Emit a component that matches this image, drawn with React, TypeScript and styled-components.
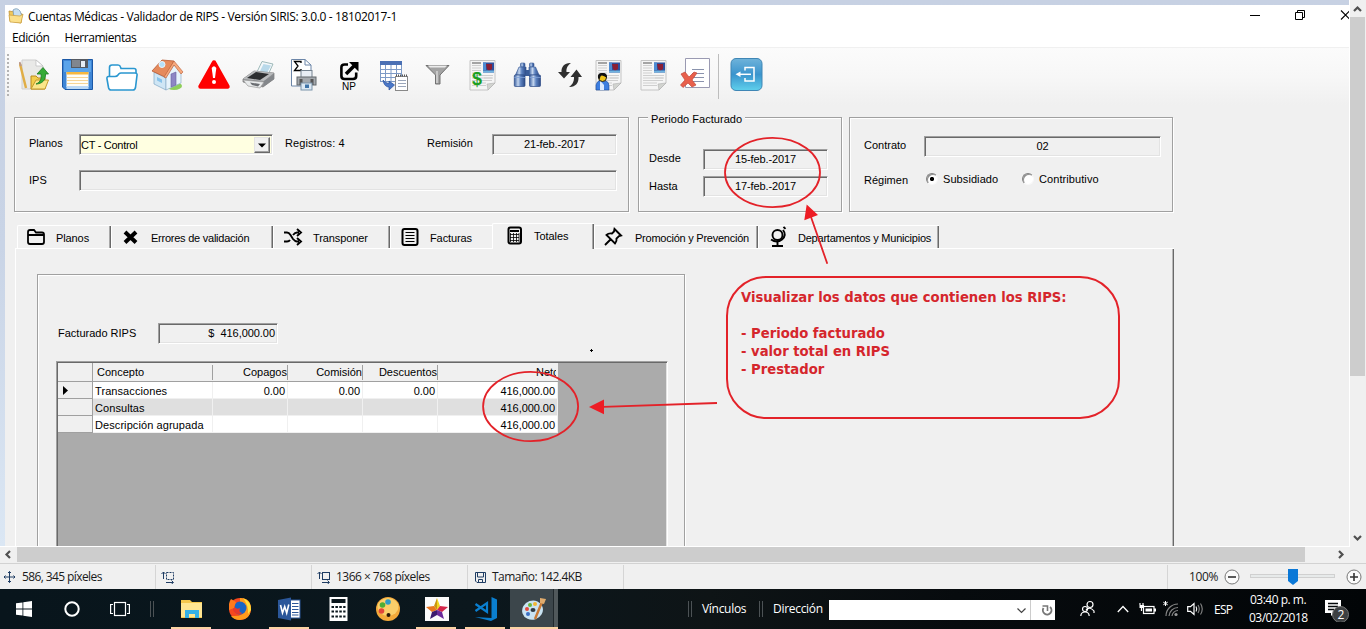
import React from 'react';
import styled, { createGlobalStyle, css } from 'styled-components';

const Global = createGlobalStyle`
  *, *::before, *::after { box-sizing: border-box; }
  body { margin: 0; overflow: hidden; }
  svg { display: block; flex: none; }
`;

const ui = `'Open Sans', 'Noto Sans', sans-serif`;
const form = `'Liberation Sans', Arial, sans-serif`;
const red = '#e32229';

const Screen = styled.div`
  width: 1366px; height: 629px; display: flex; flex-direction: column;
  overflow: hidden; background: #f0f0f0; color: #000;
`;
const Workspace = styled.div`display: flex; height: 547px; flex: none;`;
const Canvas = styled.div`
  position: relative; width: 1350px; height: 547px; overflow: hidden;
  padding: 5px 0 0 5px; border-right: 1px solid #fff; border-bottom: 1px solid #fff;
  background: linear-gradient(#c7d1e3 0, #c9d4e6 45%, #dbe7f4 100%);
`;
const AppWindow = styled.div`
  height: 100%; background: #f0f0f0; display: flex; flex-direction: column;
  font: 11px/13px ${form};
`;

const TitleBar = styled.div`
  height: 22px; flex: none; background: #fff; display: flex; align-items: center; padding-left: 3px;
`;
const TitleText = styled.div`
  font: 12px/20px ${ui}; letter-spacing: -0.36px; margin: 2px 0 0 4px; white-space: nowrap;
`;
const WindowButtons = styled.div`margin-left: auto; height: 22px;`;
const MenuBar = styled.div`
  height: 20px; flex: none; background: #fff; display: flex; gap: 15px; padding: 0 7px;
  font: 12px/22px ${ui}; letter-spacing: -0.42px;
`;
const ToolBar = styled.div`
  height: 58px; flex: none; display: flex; align-items: flex-start; padding: 6px 0 0 2px;
  border-top: 1px solid #f0f0f0;
  background: linear-gradient(#fbfbfb, #f7f7f7 50%, #f0f0f0);
`;
const Grip = styled.div`
  width: 2px; height: 42px; flex: none;
  background: repeating-linear-gradient(#b4b4b4 0 2px, transparent 2px 4px);
`;
const Tool = styled.div<{ $gap: number }>`margin: 3px 0 0 ${p => p.$gap}px; height: 36px; flex: none;`;
const ToolSeparator = styled.div`width: 1px; height: 45px; margin-left: 7px; background: #bdbdbd;`;

const Groups = styled.div`display: flex; padding: 12px 0 0 9px; height: 107px; flex: none;`;
const GroupBox = styled.div<{ $w: number; $ml?: number; $top: number; $pl: number }>`
  position: relative; width: ${p => p.$w}px; height: 95px; margin-left: ${p => p.$ml ?? 0}px;
  padding: ${p => p.$top}px 0 0 ${p => p.$pl}px;
  border: 1px solid #a0a0a0; box-shadow: 1px 1px #fff, inset 1px 1px #fff;
`;
const Legend = styled.div`
  position: absolute; top: -5px; left: 9px; padding: 0 3px; background: #f0f0f0; letter-spacing: 0.04px;
`;
const FieldRow = styled.div<{ $mt?: number }>`
  display: flex; align-items: center; height: 21px; margin-top: ${p => p.$mt ?? 0}px; white-space: nowrap;
`;
const Label = styled.div<{ $w: number; $dy?: number; $ls?: number }>`
  width: ${p => p.$w}px; flex: none; margin-top: ${p => p.$dy ?? -2}px; letter-spacing: ${p => p.$ls ?? 0}px;
`;
const sunken = css`
  border: 1px solid; border-color: #a0a0a0 #fff #fff #a0a0a0;
  box-shadow: inset 1px 1px #696969, inset -1px -1px #e3e3e3;
`;
const Field = styled.div<{ $w: number; $align?: string; $ls?: number }>`
  ${sunken}
  width: ${p => p.$w}px; height: 21px; flex: none; line-height: 18px;
  text-align: ${p => p.$align ?? 'center'}; padding: 0 2px; white-space: pre; letter-spacing: ${p => p.$ls ?? 0}px;
`;
const Combo = styled.div`
  ${sunken}
  width: 194px; height: 21px; flex: none; background: #ffffe1; display: flex; padding: 2px 2px 2px 1px;
  line-height: 16px; letter-spacing: -0.28px; justify-content: space-between;
`;
const ComboButton = styled.div`
  width: 16px; height: 16px; background: #f0f0f0; border: 1px solid;
  border-color: #e3e3e3 #696969 #696969 #e3e3e3; box-shadow: inset -1px -1px #a0a0a0;
  display: flex; align-items: center; justify-content: center;
`;
const Radio = styled.div<{ $on?: boolean; $ml?: number }>`
  width: 12px; height: 12px; border-radius: 50%; margin: -3px 5px 0 ${p => p.$ml ?? 0}px; flex: none;
  border: 1px solid; border-color: #808080 #f8f8f8 #f8f8f8 #808080; box-shadow: inset 1px 1px #909090;
  background: ${p => (p.$on ? 'radial-gradient(circle at 5px 5px, #000 1.8px, #fff 2.4px)' : '#fff')};
`;

const TabStrip = styled.div`
  display: flex; align-items: flex-end; height: 36px; padding-left: 12px; flex: none;
`;
const Tab = styled.div<{ $w: number; $active?: boolean; $noEdge?: boolean }>`
  width: ${p => p.$w}px; height: ${p => (p.$active ? 26 : 23)}px; flex: none; display: flex;
  align-items: center; white-space: nowrap; padding-bottom: ${p => (p.$active ? 2 : 0)}px;
  border-top: 1px solid #fff; border-left: 1px solid #fff; border-top-left-radius: 2px;
  box-shadow: ${p => (p.$noEdge ? 'none' : 'inset -1px 0 #696969, inset -2px 0 #a8a8a8')};
  margin-bottom: ${p => (p.$active ? -1 : 0)}px; background: #f0f0f0; position: relative;
`;
const TabIcon = styled.div<{ $l: number; $r: number }>`margin: 0 ${p => p.$r}px 0 ${p => p.$l}px;`;
const TabText = styled.span<{ $ls?: number }>`letter-spacing: ${p => p.$ls ?? 0}px; padding-top: 2px;`;
const TabPage = styled.div`
  width: 1159px; height: 300px; margin-left: 10px; flex: none; padding: 25px 0 0 21px;
  border-top: 1px solid #fff; border-left: 1px solid #fff;
  box-shadow: inset -1px 0 #696969, inset -2px 0 #b8b8b8;
`;
const TotalsBox = styled.div`
  width: 648px; height: 290px; border: 1px solid #a0a0a0; padding: 48px 0 0 18px;
  box-shadow: 1px 1px #fff, inset 1px 1px #fff;
`;
const DataGrid = styled.div`
  width: 612px; height: 210px; margin-top: 17px; background: #ababab;
  border: 1px solid; border-color: #a0a0a0 #fff #fff #a0a0a0;
  box-shadow: inset 1px 1px #696969, inset -1px 0 #e3e3e3; padding: 1px;
`;
const GridLine = styled.div<{ $shade?: string; $head?: boolean }>`
  display: grid; grid-template-columns: 35px 120px 75px 75px 75px 120px; width: 500px;
  grid-template-rows: 100%;
  height: ${p => (p.$head ? 19 : 17)}px; background: ${p => p.$shade ?? '#fff'};
`;
const RowHead = styled.div`
  background: #f0f0f0; border-right: 1px solid #a0a0a0; border-bottom: 1px solid #a0a0a0; padding: 4px 0 0 5px;
`;
const HeadCell = styled.div<{ $first?: boolean; $last?: boolean }>`
  border-bottom: 1px solid #a0a0a0; line-height: 18px; padding: 0 1px 0 ${p => (p.$first ? 4 : 0)}px;
  text-align: ${p => (p.$first ? 'left' : 'right')}; white-space: nowrap; overflow: hidden;
  background: ${p => (p.$last ? 'none' : 'linear-gradient(#a0a0a0, #a0a0a0) right 2px / 1px 15px no-repeat')};
`;
const Clip = styled.span`
  display: inline-block; width: 20px; margin-right: 1px; overflow: hidden; text-align: left; vertical-align: top;
`;
const Cell = styled.div<{ $first?: boolean }>`
  border-right: 1px solid #f0f0f0; border-bottom: 1px solid #f0f0f0; height: 17px; line-height: 16px;
  padding: 1px 2px 0; text-align: ${p => (p.$first ? 'left' : 'right')}; white-space: nowrap;
  letter-spacing: ${p => (p.$first ? 0.08 : -0.05)}px;
`;

const Marks = styled.svg`position: absolute; left: 0; top: 0;`;
const Note = styled.div`
  position: absolute; left: 726px; top: 276px; width: 394px; height: 143px;
  border: 2px solid ${red}; border-radius: 40px; padding: 10px 0 0 13px;
  font: bold 14.67px/18px 'DejaVu Sans Condensed', 'DejaVu Sans', sans-serif; font-stretch: condensed;
  color: #d5262c; white-space: pre;
`;

const VScroll = styled.div`
  width: 16px; height: 547px; background: #f0f0f0; display: flex; flex-direction: column; align-items: center;
  justify-content: space-between; padding-right: 1px;
`;
const VThumb = styled.div`width: 15px; height: 359px; background: #cdcdcd;`;
const VTop = styled.div`display: flex; flex-direction: column; align-items: center;`;
const HScroll = styled.div`
  height: 16px; flex: none; display: flex; background: #f0f0f0; align-items: flex-start;
`;
const HThumb = styled.div`width: 1288px; height: 15px; background: #cdcdcd; margin-right: 31px;`;

const StatusBar = styled.div`
  height: 26px; flex: none; display: flex; border-top: 1px solid #d2d2d2; background: #f0f0f0;
  font: 12px/26px ${ui}; letter-spacing: -0.6px; color: #1a1a1a; white-space: nowrap;
`;
const StatusCell = styled.div<{ $w: number; $pl: number; $gap?: number }>`
  width: ${p => p.$w}px; padding-left: ${p => p.$pl}px; display: flex; align-items: center; gap: ${p => p.$gap ?? 7}px;
  border-right: 1px solid #d5d5d5; height: 24px; margin-top: 1px; flex: none;
`;
const StatusText = styled.span<{ $ls?: number }>`letter-spacing: ${p => p.$ls ?? -0.6}px;`;
const ZoomTools = styled.div`display: flex; align-items: center; padding-left: 21px;`;
const ZoomValue = styled.div`width: 35px; letter-spacing: -0.4px;`;

const TaskBar = styled.div`
  height: 40px; flex: none; display: flex; color: #fff;
  background: linear-gradient(90deg, #08151c 0, #0b171d 35%, #0e1416 52%, #070b0e 70%, #020507 100%);
  font: 12px/40px ${ui}; letter-spacing: -0.2px; white-space: nowrap;
`;
const Slot = styled.div<{ $w: number }>`
  width: ${p => p.$w}px; height: 40px; display: flex; align-items: center; justify-content: center; flex: none;
`;
const TaskButton = styled.div<{ $open?: boolean; $current?: boolean }>`
  width: ${p => (p.$current ? 48 : 49)}px; height: 40px; flex: none; display: flex; flex-direction: column;
  align-items: center; justify-content: space-between; padding-top: 7px;
  background: ${p => (p.$current ? 'linear-gradient(90deg, #3c464b 0 43px, #20282c 43px 44px, #50585b 44px)' : 'none')};
  &::after {
    content: ''; width: ${p => (p.$current ? 48 : 40)}px; height: 2px;
    background: ${p => (p.$open || p.$current ? '#fbd3a3' : 'none')};
    margin-right: ${p => (p.$current ? 0 : 1)}px;
  }
`;
const BarGrip = styled.div<{ $ml: number }>`
  width: 4px; height: 16px; margin: 12px 0 0 ${p => p.$ml}px; flex: none;
  border-left: 1px solid #4c5255; border-right: 1px solid #4c5255;
`;
const BarText = styled.div<{ $w: number; $ls?: number }>`
  width: ${p => p.$w}px; letter-spacing: ${p => p.$ls ?? -0.2}px; flex: none; line-height: 39px; padding-left: 10px;
`;
const Address = styled.div`
  width: 226px; height: 20px; margin-top: 11px; background: #fff; flex: none; display: flex;
  justify-content: flex-end; align-items: center;
`;
const Tray = styled.div`display: flex; flex: none; height: 40px; align-items: center;`;
const Gap = styled.div<{ $w: number }>`width: ${p => p.$w}px; flex: none;`;
const Clock = styled.div`width: 58px; text-align: center; line-height: 18px; letter-spacing: -0.5px; flex: none;`;

const Svg = ({ w, h = 36, children }: { w: number; h?: number; children: React.ReactNode }) => (
  <svg width={w} height={h} viewBox={`0 0 ${w} ${h}`} fill="none">{children}</svg>
);

const NewsDoc = () => (
  <>
    <path d="M1 3.500H26V26L19 33H1Z" fill="#f5f5f5" stroke="#c4c4c4" />
    <path d="M26 26L19 33L18 27Z" fill="#d2d4d0" stroke="#b0b0b0" strokeWidth=".6" />
    <path d="M3 6H12" stroke="#777" strokeWidth="1.300" />
    <path d="M3 8.500H12M3 11H12M3 13.500H12M3 16H12M3 18.500H23M3 21H23M3 23.500H23M3 26H17M3 28.500H17M15 18.500H24M15 21H24" stroke="#cfcfcf" />
    <rect x="14" y="5.500" width="11" height="10" fill="#2d4f9d" />
    <path d="M14 5.500H17V13H14Z" fill="#4e8bd2" />
    <path d="M17 7H23V12L20 14L18 12Z" fill="#8b1f35" />
    <path d="M14 13.500H25V15.500H14Z" fill="#6fb4e0" />
  </>
);

const tools: { gap: number; w: number; art: React.ReactNode }[] = [
  { gap: 10, w: 30, art: (<>
    <path d="M3 3H17L24 9V32H3Z" fill="#e9e9e7" stroke="#cfcfcf" /><path d="M17 3V9H24Z" fill="#fff" stroke="#bbb" strokeWidth=".7" />
    <path d="M1 7L7 31" stroke="#e0ad45" strokeWidth="2.400" /><path d="M.5 5L2 9" stroke="#b98" strokeWidth="2" />
    <path d="M12 19H17L19 21H26V32H12Z" fill="#f3cd4c" stroke="#b98a1c" /><path d="M12 32L17 23H29.500L26 32Z" fill="#fbe68a" stroke="#c59a2c" />
    <path d="M17 27C22 25 22.500 21 22 17H18L24 10.500L29.500 17H26.500C27 23 23 27 17 27Z" fill="#35ab35" stroke="#1b7a22" strokeWidth=".8" />
  </>) },
  { gap: 13, w: 32, art: (<>
    <path d="M.5 2.500H30.500V32.500H3L.5 30Z" fill="#3f86d6" stroke="#1b58a6" /><path d="M2 4H29V15H2Z" fill="#5ba4ea" />
    <rect x="9" y="2" width="17" height="9" fill="#555a62" /><rect x="10" y="3" width="8" height="7" fill="#80868f" /><rect x="19" y="4" width="4" height="6" fill="#e6edf4" />
    <rect x="4.500" y="15" width="22" height="15" fill="#fffdf6" /><rect x="4.500" y="15" width="22" height="2.500" fill="#f7b73f" /><path d="M5 20.500H26M5 23.500H26M5 26.500H26" stroke="#f7d596" />
    <rect x="4.500" y="29" width="22" height="3" fill="#bcd9f6" />
  </>) },
  { gap: 12, w: 32, art: (<>
    <path d="M3.500 20V10.500Q3.500 8 6 8H12Q14 8 14.500 10L15 11.500H28Q30 11.500 30 13.500V20" fill="#fff" stroke="#2a97d0" strokeWidth="1.600" />
    <path d="M9 19.500Q11 19.500 12 18L13 16.800Q13.800 16 15 16H29Q31.500 16 31 18.500L29.500 30.500Q29 33 27 33H5Q3 33 2.500 30.500L1 22Q.6 19.500 2.500 19.500Z" fill="#fff" stroke="#2a97d0" strokeWidth="1.600" />
  </>) },
  { gap: 13, w: 33, art: (<>
    <ellipse cx="23" cy="29" rx="8" ry="4" fill="#8fcf5a" />
    <path d="M3 15L15 21V33L3 27Z" fill="#cfe6f5" stroke="#7fa6c4" strokeWidth=".7" /><path d="M15 20L23 8L30 15V26L15 33Z" fill="#e6f3fb" stroke="#8fb0ca" strokeWidth=".7" />
    <path d="M11 3L23 4L14 20L1 14Z" fill="#e58a5c" stroke="#b75a34" strokeWidth=".8" /><path d="M23 4L32 15L30 17L23 8L15 21L13 20Z" fill="#f7a97d" stroke="#b75a34" strokeWidth=".6" />
    <path d="M20 17L25 15V28L20 30Z" fill="#8d86c4" stroke="#655fa0" strokeWidth=".6" /><circle cx="11" cy="7.500" r="3" fill="#b5e0fa" stroke="#e8f6ff" />
    <path d="M6 20L11 22.500V26L6 23.500Z" fill="#89c3ea" />
  </>) },
  { gap: 13, w: 34, art: (<>
    <path d="M17 5.500L30.500 29.500H3.500Z" fill="#f00" stroke="#f00" strokeWidth="4.500" strokeLinejoin="round" />
    <path d="M14.700 11Q17 7.500 19.300 11L18 21H16Z" fill="#fff" /><circle cx="17" cy="25" r="2" fill="#fff" />
  </>) },
  { gap: 11, w: 34, art: (<>
    <path d="M14 17L20 4.500L31 7L26 18Z" fill="#f4f8fa" stroke="#8aa" strokeWidth=".8" /><path d="M18 14L21.500 7L29 8.500L25 16Z" fill="#b9d9ea" />
    <path d="M1 22L12 14L32 16V22L21 30L1 25Z" fill="#8b8d90" stroke="#777" strokeWidth=".7" /><path d="M1 22L12 14L32 16L22 24Z" fill="#b9bbbd" />
    <path d="M5 21L14 15L27 17L18 23Z" fill="#2c2e30" /><path d="M1 23L22 25L18 31L6 29Z" fill="#e9ebec" stroke="#999" strokeWidth=".7" /><path d="M8 25.500L18 27L16 29.500L10 28Z" fill="#6b6e72" />
    <path d="M22 24L32 18V22L22 29Z" fill="#84878b" />
  </>) },
  { gap: 14, w: 28, art: (<>
    <path d="M1.500 2.500H15L21 8V29H1.500Z" fill="#fff" stroke="#6c86a8" /><path d="M15 2.500V8H21" stroke="#6c86a8" />
    <path d="M11 6V4.500H4.500L8 9L4.500 13.500H11V12" stroke="#000" strokeWidth="1.300" />
    <rect x="11" y="13.500" width="11" height="7" fill="#e8eef5" stroke="#74828f" /><rect x="7" y="20" width="19" height="8" fill="#a4a9ae" stroke="#63686d" />
    <rect x="9.500" y="22" width="3" height="6" fill="#555" /><rect x="20.500" y="22" width="3" height="6" fill="#555" /><rect x="11" y="26" width="11" height="7" fill="#dce9f4" stroke="#7b94aa" /><path d="M15 27.500H19V31H15Z" fill="#3f74a8" />
  </>) },
  { gap: 21, w: 21, art: (<>
    <path d="M9 7.500H5.500Q2.400 7.500 2.400 10.500V19Q2.400 22 5.500 22H14Q17.200 22 17.200 19V15.500" stroke="#000" strokeWidth="2.600" />
    <path d="M7 17L15 9" stroke="#000" strokeWidth="3.600" /><path d="M10 5H19.500V14.500Z" fill="#000" />
    <text x="3" y="33" fontFamily="Liberation Sans" fontSize="10" fill="#000">NP</text>
  </>) },
  { gap: 19, w: 30, art: (<>
    <rect x="1" y="4" width="22" height="21" fill="#fff" /><rect x="1" y="4" width="22" height="4" fill="#4a70b4" />
    <path d="M1.500 8V25M6.500 8V25M12 8V25M17.500 8V25M22.500 8V25M1 12.500H23M1 16.500H23M1 20.500H23M1 24.500H17" stroke="#7d9ac6" />
    <rect x="16.500" y="19.500" width="12" height="14" fill="#fff" stroke="#888" /><path d="M17 18.500H29" stroke="#555" strokeDasharray="1 1" strokeWidth="2" /><path d="M19 23.500H27M19 26.500H27M19 29.500H27" stroke="#9aa6ba" />
    <path d="M4 23C5 29 8 30 10 30V33L15.500 28L10 24V26.500C7 26 6 25 4 23Z" fill="#4b78c8" stroke="#274f9c" strokeWidth=".7" />
  </>) },
  { gap: 16, w: 25, art: (<>
    <path d="M1 8.500H24L15 18V27H10.500V18Z" fill="#a3a3a3" stroke="#666" strokeWidth=".9" /><path d="M3 8.500H22L20 10.500H5Z" fill="#ececec" /><path d="M12 14V26" stroke="#ddd" strokeWidth="1.300" />
  </>) },
  { gap: 19, w: 27, art: (<><NewsDoc /><text x="3" y="28" fontFamily="Liberation Sans" fontSize="18" fontWeight="bold" fill="#1c9f22">$</text></>) },
  { gap: 17, w: 29, art: (<>
    <defs><linearGradient id="barrel" x1="0" x2="1" y1="0" y2="0"><stop offset="0" stopColor="#3a5f9f" /><stop offset=".35" stopColor="#c3d5ee" /><stop offset=".6" stopColor="#5c82c0" /><stop offset="1" stopColor="#2c4a86" /></linearGradient></defs>
    <rect x="11" y="13" width="7" height="6" fill="#3b5c98" />
    <rect x="7.500" y="6" width="4.500" height="4" rx="1" fill="url(#barrel)" stroke="#3b5c98" strokeWidth=".6" /><rect x="16.500" y="6" width="4.500" height="4" rx="1" fill="url(#barrel)" stroke="#3b5c98" strokeWidth=".6" />
    <path d="M6 10H13V18H2.500Z" fill="url(#barrel)" stroke="#3b5c98" strokeWidth=".7" /><path d="M16 10H22.500L26 18H16Z" fill="url(#barrel)" stroke="#3b5c98" strokeWidth=".7" />
    <rect x="1.300" y="18" width="10.700" height="11.500" rx="1" fill="url(#barrel)" stroke="#2c4a86" strokeWidth=".7" /><rect x="16.500" y="18" width="11" height="11.500" rx="1" fill="url(#barrel)" stroke="#2c4a86" strokeWidth=".7" />
    <path d="M1.300 20.500H12M16.500 20.500H27.500" stroke="#7fa0d6" strokeWidth=".8" />
  </>) },
  { gap: 15, w: 26, art: (<>
    <path d="M14 6C8 5.500 4 9.500 4.500 15H1L7 21.500L13 15H9.500C9 11 11 8 14 6Z" fill="#2f2f2f" />
    <path d="M12 30C18 30.500 22 26 21.500 20H25L19.500 12.500L13.500 20H17C17.200 25 15 28 12 30Z" fill="#2f2f2f" />
  </>) },
  { gap: 12, w: 28, art: (<><NewsDoc />
    <path d="M1 33V28Q2 24 5 23.500L11 24Q14 25 14 29V33Z" fill="#3d7ee0" stroke="#1c4c9c" strokeWidth=".6" /><path d="M5 23.500L9 28V33H5Z" fill="#dceaff" />
    <circle cx="7.500" cy="20.500" r="4" fill="#f0c419" stroke="#222" /><path d="M3 21Q2 15.500 8 16Q12.500 16 12 21Q9 18.500 7 18.500Q5 18.500 5 22Z" fill="#111" />
  </>) },
  { gap: 17, w: 28, art: <NewsDoc /> },
  { gap: 12, w: 31, art: (<>
    <path d="M5.500 1.500H29.500V30.500H5.500Z" fill="#fff" stroke="#9a9ab2" /><path d="M12 12.500H24M12 16.500H24M12 20.500H24M12 24.500H24" stroke="#8a93ad" strokeWidth="1.200" />
    <path d="M1 17L5 15L9 20L14 15L17 16L12 23L16 28L12 30L8 26L3 30.500L.5 28L5 23Z" fill="#e8604c" stroke="#c0483a" strokeWidth=".7" />
  </>) },
];

const tabs: { w: number; l: number; r: number; label: string; ls?: number; active?: boolean; noEdge?: boolean; icon: React.ReactNode }[] = [
  { w: 94, l: 8, r: 10, label: 'Planos', ls: -0.1, icon: <Svg w={20} h={20}><path d="M2 5Q2 3 4 3H8L10 5.500H16Q18 5.500 18 7.500V15Q18 17 16 17H4Q2 17 2 15ZM2 8H18" stroke="#000" strokeWidth="1.800" /></Svg> },
  { w: 162, l: 10, r: 11, label: 'Errores de validación', ls: -0.24, icon: <Svg w={18} h={20}><path d="M3 5L14 15.500M14 5L3 15.500" stroke="#000" strokeWidth="4" /></Svg> },
  { w: 117, l: 9, r: 10, label: 'Transponer', ls: -0.1, icon: <Svg w={20} h={20}><path d="M1 5.500H4Q6 5.500 7.500 8L10 12Q12 14.500 14 14.500H16M1 14.500H4Q6 14.500 7 13M10 8Q12 5.500 14 5.500H16M14 2L18 5.500L14 9M14 11L18 14.500L14 18" stroke="#000" strokeWidth="1.900" /></Svg> },
  { w: 102, l: 9, r: 10, label: 'Facturas', ls: -0.1, noEdge: true, icon: <Svg w={20} h={20}><rect x="2.500" y="2" width="15" height="16" rx="2" stroke="#000" strokeWidth="2" /><path d="M5.500 5.500H14.500M5.500 8.500H14.500M5.500 11.500H14.500M5.500 14.500H14.500" stroke="#000" strokeWidth="1.200" /></Svg> },
  { w: 102, l: 11, r: 10, label: 'Totales', ls: -0.05, active: true, icon: <Svg w={20} h={20}><rect x="4.500" y="1.500" width="12.500" height="16" rx="2" stroke="#000" strokeWidth="2" /><path d="M6 5H15" stroke="#000" strokeWidth="2" /><path d="M6.500 7V16M9.500 7V16M12.500 7V16M15 7V16M6 8.500H15M6 11.500H15M6 14.500H15" stroke="#000" strokeWidth=".8" /></Svg> },
  { w: 164, l: 8, r: 12, label: 'Promoción y Prevención', ls: -0.24, icon: <Svg w={20} h={20}><path d="M11.500 2L18 8.500L16 9L13.500 11.500Q14 14.500 12 16.500L3.500 8Q5.500 6 9 6.500L11 4.500ZM7.500 12.500L2 18" stroke="#000" strokeWidth="1.900" /></Svg> },
  { w: 181, l: 10, r: 9, label: 'Departamentos y Municipios', ls: -0.22, icon: <Svg w={20} h={22}><circle cx="8.500" cy="9" r="5" stroke="#000" strokeWidth="1.900" /><path d="M14.500 .8L16.500 2.800M14 4Q18 9 13 13.500Q8 17.500 2 13.500M8.500 15.500V20M3 20H14" stroke="#000" strokeWidth="1.900" /></Svg> },
];

const rows = [
  { name: 'Transacciones', values: ['0.00', '0.00', '0.00', '416,000.00'], current: true },
  { name: 'Consultas', values: ['', '', '', '416,000.00'], shade: '#dfdfdf' },
  { name: 'Descripción agrupada', values: ['', '', '', '416,000.00'] },
];

const apps: { open?: boolean; current?: boolean; art: React.ReactNode }[] = [
  { open: true, art: (<><path d="M1 4H10L12 6H22V22H1Z" fill="#f5c74d" /><path d="M1 7H22V21H1Z" fill="#ffe591" /><path d="M5 14H19V22H15V18H9V22H5Z" fill="#35b1e6" /></>) },
  { art: (<><circle cx="11" cy="13" r="11" fill="#f5481f" /><path d="M11 2Q22 2 22 13Q21 24 11 24Q5 24 2 20Q16 21 16 13Q16 7 11 6Z" fill="#ff9a1c" /><path d="M14 2Q22 5 22 14L19 18Q20 10 14 2Z" fill="#ffdf3b" /><circle cx="11" cy="12" r="6.500" fill="#1865c4" /><path d="M5 10Q7 14 11 12Q9 17 14 17Q7 20 4 14Z" fill="#e8382b" /><path d="M2 3L7 6L5 12L0 14Q-1 7 2 3Z" fill="#ff7a1c" /></>) },
  { open: true, art: (<><rect x="10" y="4" width="12" height="18" fill="#fff" stroke="#2b579a" /><path d="M14 7.500H20.500M14 10.500H20.500M14 13.500H20.500M14 16.500H20.500M14 19H20.500" stroke="#2b579a" /><path d="M0 4L13 1.500V24.500L0 22Z" fill="#2b579a" /><path d="M2.500 9L4.500 17L6.700 10.500L8.700 17L10.800 8.500" stroke="#fff" strokeWidth="1.600" /></>) },
  { art: (<><rect x="2.500" y="1" width="18" height="24" fill="#fff" /><rect x="4.500" y="3" width="14" height="4" fill="#0b171d" /><path d="M4.500 11H18.500M4.500 15.500H18.500M4.500 20.500H18.500" stroke="#0b171d" strokeWidth="2.200" strokeDasharray="2.500 1.400" /></>) },
  { art: (<><circle cx="12" cy="13" r="12" fill="#f3a93a" /><ellipse cx="12" cy="11" rx="10.500" ry="9" fill="#fbcf6a" /><circle cx="12" cy="6" r="2.800" fill="#2f9bc4" /><circle cx="6.500" cy="9" r="2.800" fill="#4dae35" /><circle cx="5.500" cy="15" r="2.800" fill="#e2463a" /><circle cx="12.500" cy="19" r="2" fill="#2a1708" /></>) },
  { open: true, art: (<><rect x="0" y="1" width="24" height="24" fill="#fbfbfb" /><path d="M12 2L15 10L12 14Z" fill="#f0d31e" /><path d="M12 2L9 10L12 14Z" fill="#c99410" /><path d="M23 11L15 10L12 14L17 16Z" fill="#d3264a" /><path d="M1 11L9 10L12 14L7 16Z" fill="#e8761e" /><path d="M19 23L17 16L12 14V19Z" fill="#6a2a9a" /><path d="M5 23L7 16L12 14V19Z" fill="#3c1b6e" /></>) },
  { open: true, art: (<><path d="M17.500 1L23 3.500V22L17 25L1 21L17.500 22Z" fill="#0a7fd0" /><path d="M1.500 8L13 16V7L1.500 15" stroke="#0a7fd0" strokeWidth="2.200" /></>) },
  { current: true, art: (<><ellipse cx="10.500" cy="14" rx="10.500" ry="9.500" fill="#c9e3f2" transform="rotate(-18 11 14)" /><circle cx="8" cy="9" r="2" fill="#68b53c" /><circle cx="13" cy="8" r="2" fill="#f2b632" /><circle cx="5" cy="13" r="2" fill="#e2473b" /><circle cx="6" cy="18" r="2" fill="#3a6fc4" /><ellipse cx="11" cy="14" rx="2.500" ry="2" fill="#2f3a42" /><path d="M13 23L20 6" stroke="#c97a35" strokeWidth="2.400" /><path d="M18 7L18 2L24 3L22 8Z" fill="#e0ab6d" /></>) },
];

const Arrow = ({ d, w = 15, h = 17 }: { d: string; w?: number; h?: number }) => (
  <Svg w={w} h={h}><path d={d} stroke="#505050" strokeWidth="2.200" /></Svg>
);

export default function App() {
  return (
    <Screen>
      <Global />
      <Workspace>
        <Canvas>
          <AppWindow>
            <TitleBar>
              <Svg w={16} h={18}>
                <path d="M1 4L7 5L14 7L13 16L2 14Z" fill="#efc85c" stroke="#c09030" strokeWidth=".8" />
                <path d="M5 3Q9 0 12 4L14 9L6 11Z" fill="#c7dff0" stroke="#7a9ab5" strokeWidth=".8" />
                <path d="M1 8L12 9L15 7L13 16L2 15Z" fill="#fbe08b" stroke="#c99b3a" strokeWidth=".7" />
              </Svg>
              <TitleText>Cuentas Médicas - Validador de RIPS - Versión SIRIS: 3.0.0 - 18102017-1</TitleText>
              <WindowButtons>
                <Svg w={100} h={22}>
                  <path d="M1 10.500H11" stroke="#000" />
                  <path d="M46.500 7.500H53.500V14.500H46.500ZM48.500 7V5.500H55.500V12.500H54" stroke="#000" />
                  <path d="M92 5.500L101 14.500M101 5.500L92 14.500" stroke="#000" strokeWidth="1.100" />
                </Svg>
              </WindowButtons>
            </TitleBar>
            <MenuBar><span>Edición</span><span>Herramientas</span></MenuBar>
            <ToolBar>
              <Grip />
              {tools.map((t, i) => <Tool key={i} $gap={t.gap}><Svg w={t.w}>{t.art}</Svg></Tool>)}
              <ToolSeparator />
              <Tool $gap={11}>
                <Svg w={34}>
                  <defs><linearGradient id="exit" x1="0" y1="0" x2="0" y2="1"><stop offset="0" stopColor="#6fb3da" /><stop offset=".5" stopColor="#3a94cd" /><stop offset="1" stopColor="#5fd0ec" /></linearGradient></defs>
                  <rect x="1" y="1.500" width="31" height="32" rx="5" fill="url(#exit)" stroke="#3f86b5" />
                  <path d="M15 13.500V10.500H24V24H15V21" stroke="#fff" strokeWidth="1.500" /><path d="M21 17.300H9" stroke="#fff" strokeWidth="1.500" /><path d="M10.500 14.500V20L5.500 17.300Z" fill="#fff" />
                </Svg>
              </Tool>
            </ToolBar>
            <Groups>
              <GroupBox $w={615} $top={16} $pl={14}>
                <FieldRow>
                  <Label $w={50}>Planos</Label>
                  <Combo>CT - Control<ComboButton><Svg w={8} h={5}><path d="M0 .5H8L4 4.500Z" fill="#000" /></Svg></ComboButton></Combo>
                  <Gap $w={12} />
                  <Label $w={142} $ls={0.08}>Registros: 4</Label>
                  <Label $w={65}>Remisión</Label>
                  <Field $w={125} $ls={-0.1}>21-feb.-2017</Field>
                </FieldRow>
                <FieldRow $mt={15}>
                  <Label $w={50} $dy={-1}>IPS</Label>
                  <Field $w={538} />
                </FieldRow>
              </GroupBox>
              <GroupBox $w={204} $ml={9} $top={31} $pl={10}>
                <Legend>Periodo Facturado</Legend>
                <FieldRow><Label $w={54}>Desde</Label><Field $w={125} $ls={-0.1}>15-feb.-2017</Field></FieldRow>
                <FieldRow $mt={6}><Label $w={54} $dy={0}>Hasta</Label><Field $w={125} $ls={-0.1}>17-feb.-2017</Field></FieldRow>
              </GroupBox>
              <GroupBox $w={324} $ml={7} $top={18} $pl={14}>
                <FieldRow><Label $w={60}>Contrato</Label><Field $w={237}>02</Field></FieldRow>
                <FieldRow $mt={13}>
                  <Label $w={62} $dy={0}>Régimen</Label>
                  <Radio $on /><Label $w={74} $ls={0.08}>Subsidiado</Label>
                  <Radio $ml={5} /><Label $w={70} $ls={0.08}>Contributivo</Label>
                </FieldRow>
              </GroupBox>
            </Groups>
            <TabStrip>
              {tabs.map(t => (
                <Tab key={t.label} $w={t.w} $active={t.active} $noEdge={t.noEdge}>
                  <TabIcon $l={t.l} $r={t.r}>{t.icon}</TabIcon><TabText $ls={t.ls}>{t.label}</TabText>
                </Tab>
              ))}
            </TabStrip>
            <TabPage>
              <TotalsBox>
                <FieldRow>
                  <Gap $w={2} />
                  <Label $w={100} $dy={0}>Facturado RIPS</Label>
                  <Field $w={120} $align="right" $ls={-0.05}>$  416,000.00</Field>
                </FieldRow>
                <DataGrid>
                  <GridLine $head $shade="#f0f0f0">
                    <RowHead />
                    <HeadCell $first>Concepto</HeadCell><HeadCell>Copagos</HeadCell><HeadCell>Comisión</HeadCell>
                    <HeadCell>Descuentos</HeadCell><HeadCell $last><Clip>Neto</Clip></HeadCell>
                  </GridLine>
                  {rows.map(r => (
                    <GridLine key={r.name} $shade={r.shade}>
                      <RowHead>{r.current && <Svg w={6} h={9}><path d="M0 0L5 4.500L0 9Z" fill="#000" /></Svg>}</RowHead>
                      <Cell $first>{r.name}</Cell>
                      {r.values.map((v, i) => <Cell key={i}>{v}</Cell>)}
                    </GridLine>
                  ))}
                </DataGrid>
              </TotalsBox>
            </TabPage>
          </AppWindow>
          <Marks width="1349" height="546" fill="none">
            <g stroke={red} strokeWidth="1.800">
              <ellipse cx="772.500" cy="172.500" rx="47.500" ry="34.700" />
              <ellipse cx="530.600" cy="406.500" rx="47.500" ry="34.700" />
              <path d="M827.300 263.700L811 217M717 403L603 406.800" />
            </g>
            <path d="M806.700 204.500L804.300 220.300L818 215ZM589 407L604 399.500V414.200Z" fill="#ed1c24" />
            <path d="M590 350.500H593M591.500 349V352" stroke="#000" />
          </Marks>
          <Note>{'Visualizar los datos que contienen los RIPS:\n\n- Periodo facturado\n- valor total en RIPS\n- Prestador'}</Note>
        </Canvas>
        <VScroll>
          <VTop><Arrow d="M4 11L7.500 7.500L11 11" /><VThumb /></VTop>
          <Arrow d="M4 6L7.500 9.500L11 6" />
        </VScroll>
      </Workspace>
      <HScroll>
        <Arrow w={17} h={15} d="M10 4L6.500 7.500L10 11" /><HThumb /><Arrow w={17} h={15} d="M3 4L6.500 7.500L3 11" />
      </HScroll>
      <StatusBar>
        <StatusCell $w={156} $pl={4}>
          <Svg w={11} h={12}><path d="M5.500 .5V11.500M0 6H11M4 2L5.500 .5L7 2M4 10L5.500 11.500L7 10M1.500 4.500L0 6L1.500 7.500M9.500 4.500L11 6L9.500 7.500" stroke="#1e3c63" /></Svg><StatusText $ls={-0.6}>586, 345 píxeles</StatusText>
        </StatusCell>
        <StatusCell $w={156} $pl={5}>
          <Svg w={14} h={13}><path d="M2.500 1V8M.5 3L2.500 1L4.500 3M5 11.500H12M10.500 9.500L12.500 11.500L10.500 13" stroke="#1e3c63" /><rect x="5.500" y="1.500" width="7" height="7" stroke="#1e3c63" strokeDasharray="2 1" /></Svg>
        </StatusCell>
        <StatusCell $w={156} $pl={5} $gap={5}>
          <Svg w={14} h={13}><path d="M2.500 1V8M.5 3L2.500 1L4.500 3M5 11.500H12M10.500 9.500L12.500 11.500L10.500 13" stroke="#1e3c63" /><rect x="5.500" y="1.500" width="7" height="7" stroke="#1e3c63" /></Svg><StatusText $ls={-0.53}>1366 × 768 píxeles</StatusText>
        </StatusCell>
        <StatusCell $w={156} $pl={7} $gap={6}>
          <Svg w={11} h={11}><path d="M.5 .5H10.500V10.500H2L.5 9ZM2.500 .5V5H8.500V.5M3.500 10.500V7.500H7.500V10.500" stroke="#1e3c63" /></Svg><StatusText $ls={-0.52}>Tamaño: 142.4KB</StatusText>
        </StatusCell>
        <StatusCell $w={544} $pl={0} />
        <ZoomTools>
          <ZoomValue>100%</ZoomValue>
          <Svg w={16} h={16}><circle cx="8" cy="8" r="7" fill="#fafafa" stroke="#777" /><path d="M4 8H12" stroke="#333" strokeWidth="1.600" /></Svg>
          <Gap $w={7} />
          <Svg w={99} h={18}><rect x="3.500" y="6.500" width="84" height="3" fill="#e7eaea" stroke="#d0d0d0" /><path d="M41 1H51V13L46 17L41 13Z" fill="#0a78d7" /></Svg>
          <Svg w={16} h={16}><circle cx="8" cy="8" r="7" fill="#fafafa" stroke="#777" /><path d="M4 8H12M8 4V12" stroke="#333" strokeWidth="1.600" /></Svg>
        </ZoomTools>
      </StatusBar>
      <TaskBar>
        <Slot $w={48}><Svg w={16} h={16}><path d="M0 2.300L6.500 1.400V7.600H0ZM7.300 1.300L16 0V7.600H7.300ZM0 8.400H6.500V14.600L0 13.700ZM7.300 8.400H16V16L7.300 14.700Z" fill="#fff" /></Svg></Slot>
        <Slot $w={48}><Svg w={16} h={16}><circle cx="8" cy="8" r="6.700" stroke="#fff" strokeWidth="2" /></Svg></Slot>
        <Slot $w={48}><Svg w={20} h={16}><rect x="4.500" y="1.500" width="11" height="13" stroke="#fff" strokeWidth="1.200" /><path d="M3 3.500H.6V12.500H3M17 3.500H19.400V12.500H17" stroke="#fff" strokeWidth="1.200" /></Svg></Slot>
        <BarGrip $ml={6} /><Gap $w={13} />
        {apps.map((a, i) => <TaskButton key={i} $open={a.open} $current={a.current}><Svg w={24} h={26}>{a.art}</Svg></TaskButton>)}
        <BarGrip $ml={130} />
        <BarText $w={67} $ls={-0.3}>Vínculos</BarText>
        <BarGrip $ml={0} />
        <BarText $w={66} $ls={-0.3}>Dirección</BarText>
        <Address>
          <Svg w={26} h={20}><path d="M4.500 8.500L8.500 12.500L12.500 8.500" stroke="#444" strokeWidth="1.200" /><path d="M17.500 0V20" stroke="#ccc" /></Svg>
          <Svg w={16} h={20}><path d="M4.500 8A4.300 4.300 0 1 0 11 7" stroke="#777" strokeWidth="1.900" /><path d="M3.500 6H8.500V11" stroke="#777" strokeWidth="1.600" /></Svg>
        </Address>
        <Tray>
          <Gap $w={25} />
          <Svg w={16} h={18}><circle cx="10" cy="4.500" r="3" stroke="#fff" strokeWidth="1.200" /><path d="M6 10Q10 6 14 11V13" stroke="#fff" strokeWidth="1.200" /><circle cx="5" cy="9" r="2.500" stroke="#fff" strokeWidth="1.200" /><path d="M.8 16Q1 12 5 12Q9 12 9.200 16" stroke="#fff" strokeWidth="1.200" /></Svg>
          <Gap $w={21} />
          <Svg w={12} h={8}><path d="M.8 7L6 1.500L11.200 7" stroke="#fff" strokeWidth="1.300" /></Svg>
          <Gap $w={10} />
          <Svg w={17} h={14}><rect x="4.500" y="4.500" width="10.500" height="7" stroke="#fff" strokeWidth="1.200" /><path d="M6.500 6.500H13V9.500H6.500ZM15 6.500H17V9.500H15Z" fill="#fff" /><path d="M1 1V3M4 1V3M2.500 6V9" stroke="#fff" strokeWidth="1.200" /><path d="M.5 3H5V6H.5Z" fill="#fff" /></Svg>
          <Gap $w={7} />
          <Svg w={16} h={18}><path d="M2.500 1V6M.3 2.200L4.700 4.800M4.700 2.200L.3 4.800" stroke="#fff" /><path d="M3 16A12 12 0 0 1 15 4M6 16A9 9 0 0 1 15 7.500M9 16A6 6 0 0 1 15 10.500" stroke="#858585" strokeWidth="1.200" /><circle cx="13" cy="14.500" r="1.600" fill="#999" /></Svg>
          <Gap $w={8} />
          <Svg w={17} h={14}><path d="M.7 4.700H3.500L7 1.500V12.500L3.500 9.300H.7Z" stroke="#fff" strokeWidth="1.200" /><path d="M9 4.500Q10.500 7 9 9.500" stroke="#fff" strokeWidth="1.100" /><path d="M11 3Q13.500 7 11 11M13.500 1.500Q17 7 13.500 12.500" stroke="#888" strokeWidth="1.100" /></Svg>
          <BarText $w={45} $ls={-0.7}>ESP</BarText>
          <Clock>03:40 p. m.<br />03/02/2018</Clock>
          <Gap $w={18} />
          <Svg w={26} h={26}>
            <path d="M0 4H16V17H9L6 20V17H0Z" fill="#fff" /><path d="M3 7.500H13M3 10.500H13M3 13.500H9" stroke="#05090b" strokeWidth="1.300" />
            <circle cx="15.500" cy="18.500" r="8" fill="#3d4042" stroke="#777" />
            <text x="12.500" y="23" fontFamily="Open Sans" fontSize="12" fill="#fff">2</text>
          </Svg>
        </Tray>
      </TaskBar>
    </Screen>
  );
}
